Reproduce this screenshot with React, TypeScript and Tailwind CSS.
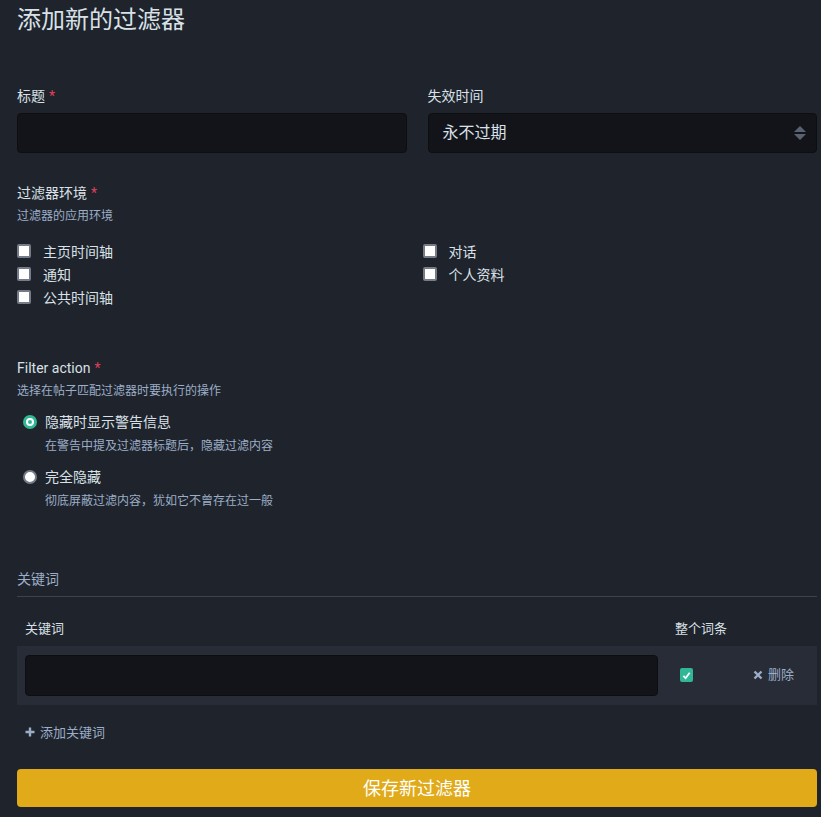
import React from 'react';

const font = { fontFamily: 'Roboto, "Noto Sans CJK SC", sans-serif' };

const Req = () => <span className="text-[#df405a] ml-1">*</span>;

const Checkbox: React.FC<{ label: string }> = ({ label }) => (
  <label className="flex items-center h-[23px] text-[14px] text-[#d9e1e8]">
    <span className="w-[14px] h-[14px] bg-white border-2 border-[#767b88] rounded-[2px] mr-[12px] -mt-[4px]" />
    {label}
  </label>
);

const Radio: React.FC<{ label: string; hint: string; checked?: boolean }> = ({ label, hint, checked }) => (
  <div className="flex pl-[6px]">
    {checked ? (
      <span className="w-[14px] h-[14px] rounded-full bg-[#30b896] flex items-center justify-center mt-[4px]">
        <span className="w-[8px] h-[8px] rounded-full border-2 border-white" />
      </span>
    ) : (
      <span className="w-[14px] h-[14px] rounded-full bg-white border-2 border-[#767b88] mt-[4px]" />
    )}
    <div className="ml-[8px]">
      <div className="text-[14px] text-[#d9e1e8] leading-[22px]">{label}</div>
      <div className="text-[12px] text-[#9baec8] mt-[4px] leading-[18px]">{hint}</div>
    </div>
  </div>
);

export default function App() {
  const contexts = [
    ['主页时间轴', '通知', '公共时间轴'],
    ['对话', '个人资料'],
  ];

  return (
    <div className="min-h-[817px] bg-[#1f232b] pl-[17px] pr-[4px] pt-[4px] pb-[10px] w-[821px]" style={font}>
      <h1 className="text-[24px] font-normal text-[#d9e1e8] leading-[32px]">添加新的过滤器</h1>

      <div className="grid grid-cols-2 gap-[21px] mt-[50px]">
        <div>
          <div className="text-[14px] text-[#d9e1e8] leading-[20px]">标题<Req /></div>
          <div className="h-[40px] mt-[7px] bg-[#131419] border border-[#0d0e12] rounded-[4px]" />
        </div>
        <div>
          <div className="text-[14px] text-[#d9e1e8] leading-[20px]">失效时间</div>
          <div className="h-[40px] mt-[7px] bg-[#131419] border border-[#0d0e12] rounded-[4px] flex items-center justify-between pl-[14px] pr-[9px]">
            <span className="text-[16px] text-[#d9e1e8]">永不过期</span>
            <svg width="14" height="18" viewBox="0 0 14 18">
              <path d="M7 2 L13 8 H1 Z" fill="#5a6172" />
              <path d="M1 10 H13 L7 16 Z" fill="#5a6172" />
            </svg>
          </div>
        </div>
      </div>

      <div className="mt-[30px]">
        <div className="text-[14px] text-[#d9e1e8] leading-[20px]">过滤器环境<Req /></div>
        <div className="text-[12px] text-[#9baec8] leading-[18px] mt-[4px]">过滤器的应用环境</div>
        <div className="grid grid-cols-2 gap-[21px] mt-[16px]">
          {contexts.map((col, i) => (
            <div key={i} className={i === 1 ? '-ml-[5px]' : ''}>
              {col.map((c) => (
                <Checkbox key={c} label={c} />
              ))}
            </div>
          ))}
        </div>
      </div>

      <div className="mt-[48px]">
        <div className="text-[14px] text-[#d9e1e8] leading-[20px]">Filter action<Req /></div>
        <div className="text-[12px] text-[#9baec8] leading-[18px] mt-[4px]">选择在帖子匹配过滤器时要执行的操作</div>
        <div className="mt-[11px] flex flex-col gap-[11px]">
          <Radio checked label="隐藏时显示警告信息" hint="在警告中提及过滤器标题后，隐藏过滤内容" />
          <Radio label="完全隐藏" hint="彻底屏蔽过滤内容，犹如它不曾存在过一般" />
        </div>
      </div>

      <div className="mt-[59px]">
        <div className="text-[14px] text-[#9baec8] leading-[20px] pb-[7px] border-b border-[#3d4250]">关键词</div>
        <table className="w-full mt-[22px] border-collapse">
          <thead>
            <tr className="text-[13px] text-[#d9e1e8] text-left">
              <th className="font-normal pl-[8px] pb-[7px]">关键词</th>
              <th className="font-normal w-[78px] pb-[7px]">整个词条</th>
              <th className="w-[64px]" />
            </tr>
          </thead>
          <tbody>
            <tr className="bg-[#282c37]">
              <td className="pl-[8px] pr-[17px] py-[9px]">
                <div className="h-[41px] bg-[#131419] border border-[#0d0e12] rounded-[4px]" />
              </td>
              <td>
                <span className="ml-[5px] w-[13px] h-[14px] rounded-[2px] bg-[#30b896] flex items-center justify-center">
                  <svg width="9" height="9" viewBox="0 0 10 10">
                    <path d="M1.5 5.5 L4 8 L8.5 2" stroke="white" strokeWidth="2" fill="none" />
                  </svg>
                </span>
              </td>
              <td className="text-[13px] text-[#9baec8] whitespace-nowrap">
                <span className="inline-flex items-center gap-[5px]">
                  <svg width="10" height="10" viewBox="0 0 10 10">
                    <path d="M1.5 1.5 L8.5 8.5 M8.5 1.5 L1.5 8.5" stroke="#9baec8" strokeWidth="2.4" />
                  </svg>
                  删除
                </span>
              </td>
            </tr>
          </tbody>
        </table>
        <div className="flex items-center gap-[5px] text-[13px] text-[#9baec8] mt-[18px] ml-[8px]">
          <svg width="10" height="10" viewBox="0 0 10 10">
            <path d="M5 0.5 V9.5 M0.5 5 H9.5" stroke="#9baec8" strokeWidth="2.4" />
          </svg>
          添加关键词
        </div>
      </div>

      <button className="w-full h-[38px] mt-[27px] rounded-[4px] bg-[#e0aa19] text-white text-[18px] font-normal">
        保存新过滤器
      </button>
    </div>
  );
}
